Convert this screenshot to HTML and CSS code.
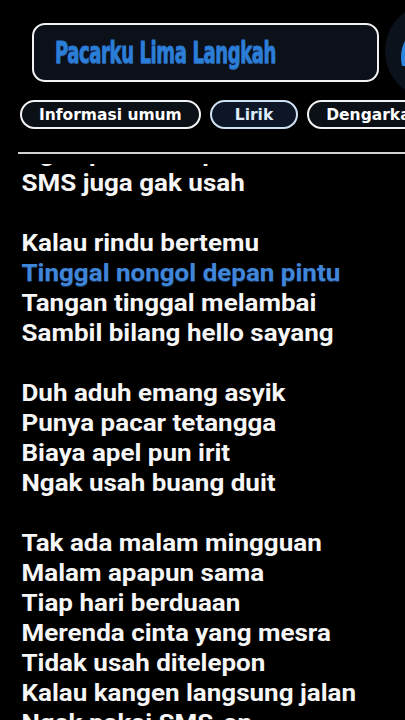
FILE: index.html
```html
<!DOCTYPE html>
<html>
<head>
<meta charset="utf-8">
<link rel="stylesheet" href="styles.css">
</head>
<body>
<div class="page">
  <div class="top">
    <div class="title-box"><span class="title">Pacarku Lima Langkah</span></div>
    <div class="avatar">
      <svg width="96" height="96" viewBox="0 0 96 96"><circle cx="48" cy="48" r="48" fill="#0c121b"/><path d="M21 36 C16 44 15 54 17 63 L24 63 C22 54 22 44 25 36 Z" fill="#2f86e0"/></svg>
    </div>
  </div>
  <div class="tabs">
    <span class="tab">Informasi umum</span>
    <span class="tab active">Lirik</span>
    <span class="tab">Dengarkan</span>
  </div>
  <div class="rule"></div>
  <div class="lyrics-view">
    <div class="lyrics">
      <p>Ngak pakai telepon-an</p>
      <p>SMS juga gak usah</p>
      <p class="gap"></p>
      <p>Kalau rindu bertemu</p>
      <p class="now">Tinggal nongol depan pintu</p>
      <p>Tangan tinggal melambai</p>
      <p>Sambil bilang hello sayang</p>
      <p class="gap"></p>
      <p>Duh aduh emang asyik</p>
      <p>Punya pacar tetangga</p>
      <p>Biaya apel pun irit</p>
      <p>Ngak usah buang duit</p>
      <p class="gap"></p>
      <p>Tak ada malam mingguan</p>
      <p>Malam apapun sama</p>
      <p>Tiap hari berduaan</p>
      <p>Merenda cinta yang mesra</p>
      <p>Tidak usah ditelepon</p>
      <p>Kalau kangen langsung jalan</p>
      <p>Ngak pakai SMS-an</p>
    </div>
  </div>
</div>
</body>
</html>
```
FILE: styles.css
```css
html, body {
  margin: 0;
  padding: 0;
  background: #000;
  overflow: hidden;
}
.page {
  width: 405px;
  height: 720px;
  overflow: hidden;
}
.top {
  display: flex;
  align-items: center;
  padding-top: 3px;
  height: 96px;
  width: 500px;
}
.title-box {
  margin-left: 32px;
  margin-top: 3px;
  width: 343px;
  height: 55px;
  border: 2.5px solid #f2f2f2;
  border-radius: 13px;
  background: #0b1019;
  display: flex;
  align-items: center;
  flex: none;
}
.title {
  margin-left: 21px;
  font-family: "DejaVu Sans Condensed", "DejaVu Sans", sans-serif;
  font-weight: bold;
  font-size: 29.5px;
  color: #2b7fd9;
  -webkit-text-stroke: 0.8px #2a78d2;
  text-shadow: 0 1px 1px #2b4a70;
  display: inline-block;
  transform: scaleX(0.68);
  transform-origin: left center;
  letter-spacing: -0.6px;
  white-space: nowrap;
}
.avatar {
  margin-left: 6px;
  width: 96px;
  height: 96px;
  flex: none;
}
.tabs {
  display: flex;
  gap: 9px;
  margin-top: 1px;
  padding-left: 20px;
  width: 600px;
}
.tab {
  box-sizing: border-box;
  height: 29px;
  border: 2.5px solid #f2f2f2;
  border-radius: 15px;
  background: #0b0f16;
  color: #fff;
  font-family: "DejaVu Sans", sans-serif;
  font-weight: bold;
  font-size: 15.5px;
  display: flex;
  align-items: center;
  padding: 0 17px;
  white-space: nowrap;
}
.tab.active {
  border-color: #cfe2f5;
  background: #0d1626;
  color: #dcebfa;
  padding: 0 23px;
}
.rule {
  margin: 23px 0 0 18px;
  height: 2px;
  background: #d0d0d0;
}
.lyrics-view {
  height: 600px;
  overflow: hidden;
  margin-top: 10px;
}
.lyrics {
  margin-top: -25px;
  padding-left: 19px;
  font-family: Roboto, "Liberation Sans", sans-serif;
  font-weight: 700;
  font-size: 23px;
  line-height: 30px;
  color: #f6f6f6;
  transform: scaleX(1.13);
  transform-origin: left top;
}
.lyrics p {
  margin: 0;
  height: 30px;
  white-space: nowrap;
}
.lyrics .now {
  color: #3f86da;
  text-shadow: 0 1px 1px #1c3a66;
}
```
